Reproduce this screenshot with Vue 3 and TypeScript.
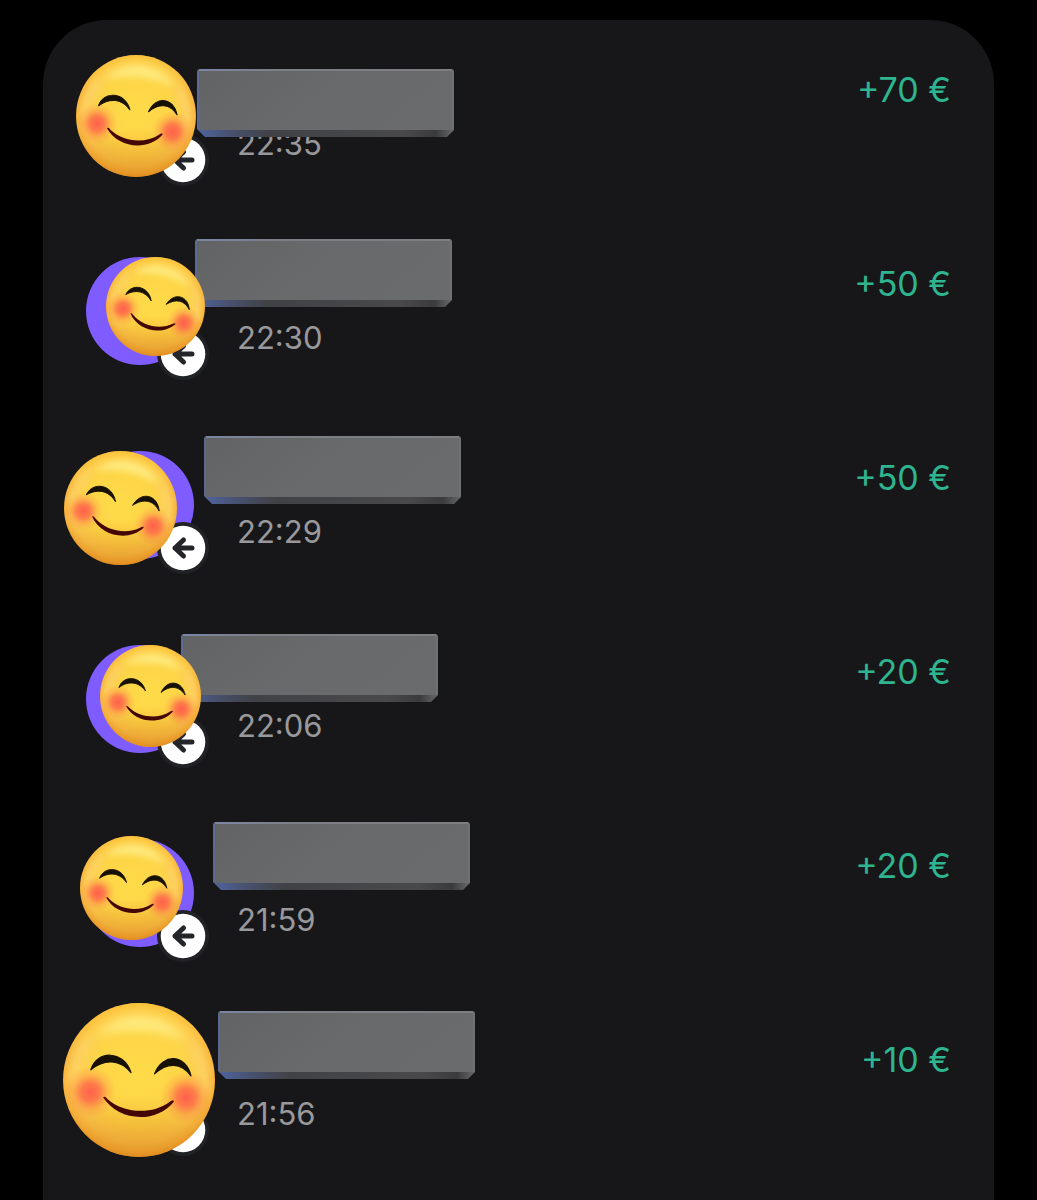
<script setup lang="ts">
interface Spot {
  x: number
  y: number
}

interface Transfer {
  time: string
  amount: string
  plate: Spot
  face: Spot & { width: number; height: number; tilt: number }
}

const transfers: Transfer[] = [
  { time: '22:35', amount: '+70 €', plate: { x: 111, y: 6 }, face: { x: -10, y: -8, width: 120, height: 122, tilt: 6 } },
  { time: '22:30', amount: '+50 €', plate: { x: 109, y: -18 }, face: { x: 20, y: 0, width: 99, height: 99, tilt: 13 } },
  { time: '22:29', amount: '+50 €', plate: { x: 118, y: -15 }, face: { x: -22, y: 0, width: 113, height: 114, tilt: 12 } },
  { time: '22:06', amount: '+20 €', plate: { x: 95, y: -11 }, face: { x: 14, y: 0, width: 101, height: 102, tilt: 6 } },
  { time: '21:59', amount: '+20 €', plate: { x: 127, y: -17 }, face: { x: -6, y: -3, width: 103, height: 104, tilt: 8 } },
  { time: '21:56', amount: '+10 €', plate: { x: 132, y: -22 }, face: { x: -23, y: -30, width: 152, height: 154, tilt: 3 } },
]

const plateStyle = (t: Transfer) => ({ left: `${t.plate.x}px`, top: `${t.plate.y}px` })

const faceStyle = (t: Transfer) => ({
  left: `${t.face.x}px`,
  top: `${t.face.y}px`,
  width: `${t.face.width}px`,
  height: `${t.face.height}px`,
})
</script>

<template>
  <main class="screen">
    <svg class="defs" width="0" height="0" aria-hidden="true">
      <defs>
        <radialGradient id="skin" cx="0.5" cy="0.48" r="0.53">
          <stop offset="0" stop-color="#ffdb48" />
          <stop offset="0.6" stop-color="#fdd548" />
          <stop offset="0.82" stop-color="#fccb50" />
          <stop offset="0.93" stop-color="#f8b63e" />
          <stop offset="1" stop-color="#e8962a" />
        </radialGradient>
        <linearGradient id="shade" x1="0" y1="0" x2="0" y2="1">
          <stop offset="0" stop-color="#ffc935" stop-opacity="0.5" />
          <stop offset="0.3" stop-color="#ffd83c" stop-opacity="0" />
          <stop offset="0.6" stop-color="#e58f20" stop-opacity="0" />
          <stop offset="1" stop-color="#d98218" stop-opacity="0.65" />
        </linearGradient>
        <radialGradient id="blush">
          <stop offset="0" stop-color="#ff5a4c" stop-opacity="0.95" />
          <stop offset="0.35" stop-color="#ff5f4b" stop-opacity="0.75" />
          <stop offset="0.7" stop-color="#ff7248" stop-opacity="0.25" />
          <stop offset="1" stop-color="#ff7a45" stop-opacity="0" />
        </radialGradient>
        <filter id="soft" x="-30%" y="-60%" width="160%" height="220%">
          <feGaussianBlur stdDeviation="3" />
        </filter>
        <linearGradient id="plate-front" x1="0" y1="0" x2="1" y2="0.3">
          <stop offset="0" stop-color="#626365" />
          <stop offset="0.5" stop-color="#68696a" />
          <stop offset="1" stop-color="#6a6b6d" />
        </linearGradient>
        <linearGradient id="plate-edge">
          <stop offset="0" stop-color="#5065a0" />
          <stop offset="0.12" stop-color="#485272" />
          <stop offset="0.28" stop-color="#414246" />
          <stop offset="0.8" stop-color="#49494b" />
          <stop offset="0.93" stop-color="#3b3b3d" />
          <stop offset="1" stop-color="#68696b" />
        </linearGradient>
        <linearGradient id="plate-top" gradientUnits="userSpaceOnUse" x1="0" y1="0" x2="257" y2="0">
          <stop offset="0" stop-color="#8392bd" />
          <stop offset="0.3" stop-color="#858791" />
          <stop offset="1" stop-color="#858587" />
        </linearGradient>
      </defs>
    </svg>

    <ul class="card">
      <li v-for="t in transfers" :key="t.time" class="row">
        <div class="avatar">
          <svg class="badge" viewBox="0 0 52 52" aria-hidden="true">
            <circle cx="26" cy="26" r="26" fill="#212225" />
            <circle cx="26" cy="26" r="22.300" fill="#fff" />
            <path d="M35 26H18M26.500 18L18 26L26.500 34" fill="#242529" stroke="#242529" stroke-width="5" stroke-linecap="round" stroke-linejoin="round" fill-opacity="0" />
          </svg>
        </div>
        <time class="time">{{ t.time }}</time>
        <span class="amount">{{ t.amount }}</span>

        <svg class="plate" :style="plateStyle(t)" viewBox="0 0 257 68" aria-hidden="true">
          <path d="M0 58H257V61L250 68H8L0 60Z" fill="url(#plate-edge)" />
          <path d="M3 0H254Q257 0 257 3V61H2L0 59V3Q0 0 3 0Z" fill="url(#plate-front)" />
          <path d="M2 1H255" stroke="url(#plate-top)" stroke-width="1.500" />
          <path d="M1 2V60" stroke="#586b9c" stroke-width="1.500" />
          <path d="M256 2V60" stroke="#77787a" stroke-width="1" />
        </svg>

        <svg class="face" :style="faceStyle(t)" viewBox="0 0 100 100" preserveAspectRatio="none" aria-hidden="true">
          <circle cx="50" cy="50" r="50" fill="url(#skin)" />
          <circle cx="50" cy="50" r="50" fill="url(#shade)" />
          <g :transform="`rotate(${t.face.tilt} 50 50)`">
            <path d="M20 23Q32 8 50 8Q68 8 80 23Q66 18 50 18Q34 18 20 23Z" fill="#fff08c" opacity="0.8" filter="url(#soft)" />
            <path d="M7 54Q8 36 18 25M82 25Q92 36 93 54" fill="none" stroke="#ffdc8c" stroke-width="4" opacity="0.5" filter="url(#soft)" />
            <circle cx="18.500" cy="59.500" r="17" fill="url(#blush)" />
            <circle cx="81.500" cy="59.500" r="17" fill="url(#blush)" />
            <path d="M18 45C21 32 39 31 44.500 45.500C37 37.500 27 37 18 45Z" fill="#171004" stroke="#171004" stroke-width="0.800" stroke-linejoin="round" />
            <path d="M60 45.500C65 31 80 32 84 45.500C77 37 68 37.500 60 45.500Z" fill="#171004" stroke="#171004" stroke-width="0.800" stroke-linejoin="round" />
            <path d="M27 62.500C28 61.500 29 62.500 30 63.500C42 72.500 60 72 71 63C72 62 74 61.500 73.500 63C63 77.500 38 78 27 62.500Z" fill="#430705" />
          </g>
        </svg>
      </li>
    </ul>
  </main>
</template>

<style>
body {
  margin: 0;
  background: #000;
}
</style>

<style scoped>
.screen {
  box-sizing: border-box;
  min-height: 100vh;
  padding: 20px 43px 0;
  display: flex;
  flex-direction: column;
  background: #000;
  font-family: Inter, "Liberation Sans", sans-serif;
}

.defs {
  position: absolute;
}

.card {
  flex: 1;
  margin: 0;
  padding: 43px 43px 59px;
  display: flex;
  flex-direction: column;
  gap: 86px;
  list-style: none;
  background: #17171a;
  border-radius: 64px 64px 0 0;
}

.row {
  position: relative;
  display: grid;
  grid-template-columns: 108px 1fr auto;
  grid-template-rows: 54px 54px;
  column-gap: 43px;
  line-height: 54px;
}

.avatar {
  position: relative;
  grid-row: 1 / 3;
  border-radius: 50%;
  background: #7f5cff;
}

.badge {
  position: absolute;
  right: -15px;
  bottom: -15px;
  width: 52px;
  height: 52px;
}

.time {
  grid-column: 2;
  grid-row: 2;
  font-size: 31px;
  color: #99999b;
}

.amount {
  grid-column: 3;
  grid-row: 1;
  font-size: 34px;
  color: #2eb58f;
}

.plate {
  position: absolute;
  width: 257px;
  height: 68px;
}

.face {
  position: absolute;
}
</style>
